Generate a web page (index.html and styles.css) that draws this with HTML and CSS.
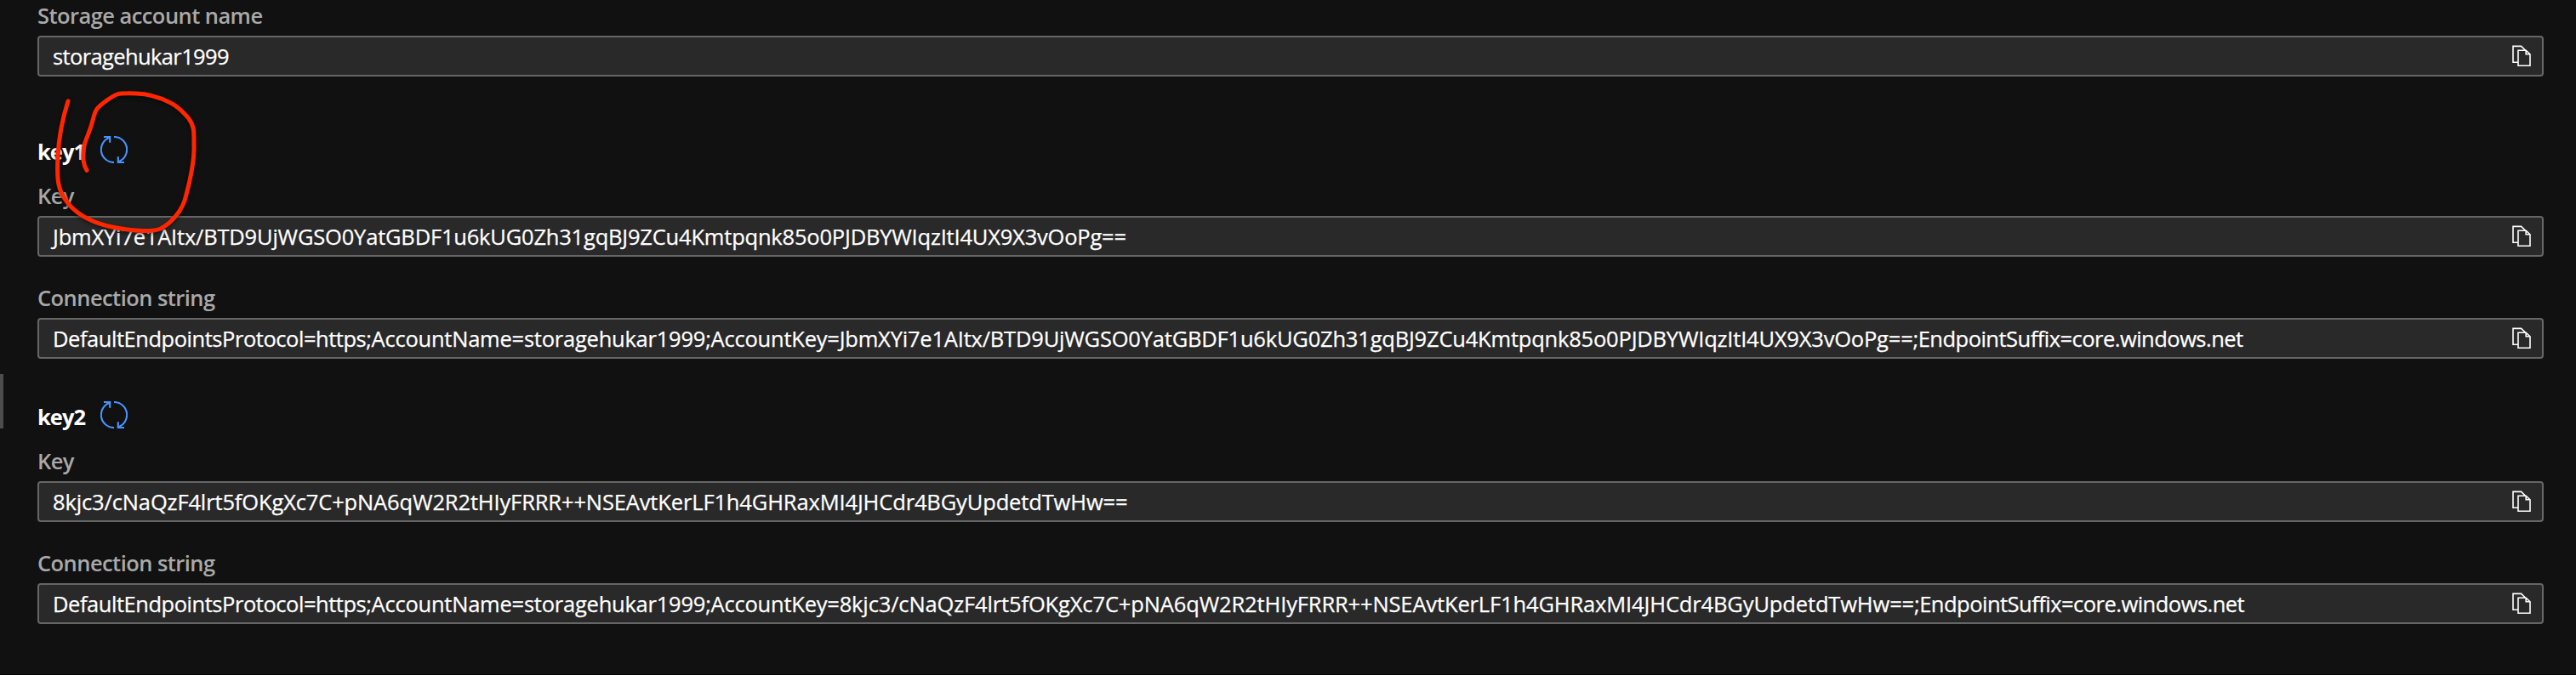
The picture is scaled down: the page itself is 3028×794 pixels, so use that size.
FILE: index.html
```html
<!DOCTYPE html>
<html lang="en">
<head>
<meta charset="utf-8">
<title>Access keys</title>
<link rel="stylesheet" href="styles.css">
</head>
<body>
<svg class="defs" width="0" height="0" aria-hidden="true">
  <symbol id="copy" viewBox="0 0 24 26">
    <path d="M8 20.2H2V1.4H11.6L16.4 6M8 6.2H17.2L22 10.8V24.3H8ZM17.2 6.2V10.8H22"/>
  </symbol>
  <symbol id="refresh" viewBox="0 0 32 32">
    <path d="M16 1A15 15 0 0 1 21 30.2M16 31A15 15 0 0 1 11 1.8M4 1H11.2V7.7M20.8 24.3V31H28"/>
  </symbol>
</svg>
<div class="handle"></div>
<main class="panel">
  <div class="field">
    <label class="label">Storage account name</label>
    <div class="box"><span class="value name">storagehukar1999</span><svg class="copy"><use href="#copy"/></svg></div>
  </div>

  <section class="group first">
    <div class="head"><h2 class="title">key1</h2><svg class="refresh"><use href="#refresh"/></svg></div>
    <div class="field">
      <label class="label">Key</label>
      <div class="box"><span class="value key-a">JbmXYi7e1AItx/BTD9UjWGSO0YatGBDF1u6kUG0Zh31gqBJ9ZCu4Kmtpqnk85o0PJDBYWIqzItI4UX9X3vOoPg==</span><svg class="copy"><use href="#copy"/></svg></div>
    </div>
    <div class="field next">
      <label class="label">Connection string</label>
      <div class="box"><span class="value"><span class="proto">DefaultEndpointsProtocol=https;</span><span class="acct">AccountName=storagehukar1999;AccountKey=</span><span class="key-a">JbmXYi7e1AItx/BTD9UjWGSO0YatGBDF1u6kUG0Zh31gqBJ9ZCu4Kmtpqnk85o0PJDBYWIqzItI4UX9X3vOoPg==</span><span class="suffix">;EndpointSuffix=core.windows.net</span></span><svg class="copy"><use href="#copy"/></svg></div>
    </div>
  </section>

  <section class="group">
    <div class="head"><h2 class="title">key2</h2><svg class="refresh"><use href="#refresh"/></svg></div>
    <div class="field">
      <label class="label">Key</label>
      <div class="box"><span class="value key-b">8kjc3/cNaQzF4lrt5fOKgXc7C+pNA6qW2R2tHIyFRRR++NSEAvtKerLF1h4GHRaxMI4JHCdr4BGyUpdetdTwHw==</span><svg class="copy"><use href="#copy"/></svg></div>
    </div>
    <div class="field next">
      <label class="label">Connection string</label>
      <div class="box"><span class="value"><span class="proto">DefaultEndpointsProtocol=https;</span><span class="acct">AccountName=storagehukar1999;AccountKey=</span><span class="key-b">8kjc3/cNaQzF4lrt5fOKgXc7C+pNA6qW2R2tHIyFRRR++NSEAvtKerLF1h4GHRaxMI4JHCdr4BGyUpdetdTwHw==</span><span class="suffix">;EndpointSuffix=core.windows.net</span></span><svg class="copy"><use href="#copy"/></svg></div>
    </div>
  </section>
</main>
<svg class="mark" viewBox="0 0 720 840" aria-hidden="true">
  <path d="M240 357C223 410 208 475 204 550C200 630 202 670 238 715C280 768 345 793 415 805C475 816 540 819 568 806C600 790 645 745 656 690C672 630 686 560 684 510C684 465 686 445 664 416C640 388 625 374 600 362C560 342 520 331 480 330C410 328 413 328 369 360C335 385 335 395 327 425C316 470 303 485 296 518C291 560 293 580 306 601"/>
</svg>
</body>
</html>
```

FILE: styles.css
```css
* { box-sizing: border-box; }

body {
  margin: 0;
  height: 794px;
  overflow: hidden;
  background: #111;
  border-bottom: 1px solid #040404;
  color: #fff;
  font: 25.5px/28px "Open Sans", "Noto Sans", sans-serif;
  font-kerning: normal;
  font-variant-ligatures: none;
}

.defs { position: absolute; }

.handle {
  position: absolute;
  left: 0;
  top: 440px;
  width: 4px;
  height: 64px;
  background: #4d4d4d;
}

.panel { padding: 4px 38px 0 44px; }

.field {
  display: flex;
  flex-direction: column;
  gap: 10px;
}

.next { margin-top: 34px; }

.label {
  color: #a9a9a9;
  font-weight: 600;
  letter-spacing: -0.56px;
}

.box {
  display: flex;
  align-items: center;
  justify-content: space-between;
  height: 48px;
  padding: 0 12px 0 16px;
  border: 2px solid #666;
  border-radius: 4px;
  background: #292929;
}

.value {
  white-space: nowrap;
  -webkit-text-stroke: 0.25px #fff;
}
.name { letter-spacing: -0.62px; }
.key-a { letter-spacing: -0.2px; }
.key-b { letter-spacing: -0.14px; }
.proto { letter-spacing: -0.46px; }
.acct { letter-spacing: -0.23px; }
.suffix { letter-spacing: -0.52px; }

.copy {
  flex: none;
  width: 24px;
  height: 26px;
  fill: none;
  stroke: #fff;
  stroke-width: 1.6;
}

.group { margin-top: 50px; }
.first { margin-top: 70px; }

.head {
  display: flex;
  height: 32px;
  margin-bottom: 24px;
}

.title {
  width: 74px;
  margin: 0;
  padding-top: 4px;
  font-size: 25.5px;
  font-weight: 700;
  letter-spacing: -1px;
}

.refresh {
  width: 32px;
  height: 32px;
  fill: none;
  stroke: #4894fe;
  stroke-width: 2.1;
}

.mark {
  position: absolute;
  left: 0;
  top: 0;
  width: 240px;
  height: 280px;
  fill: none;
  stroke: #ff2600;
  stroke-width: 15;
  stroke-linecap: round;
  stroke-linejoin: round;
  filter: drop-shadow(0 2px 2px rgba(0, 0, 0, 0.5));
}
```
